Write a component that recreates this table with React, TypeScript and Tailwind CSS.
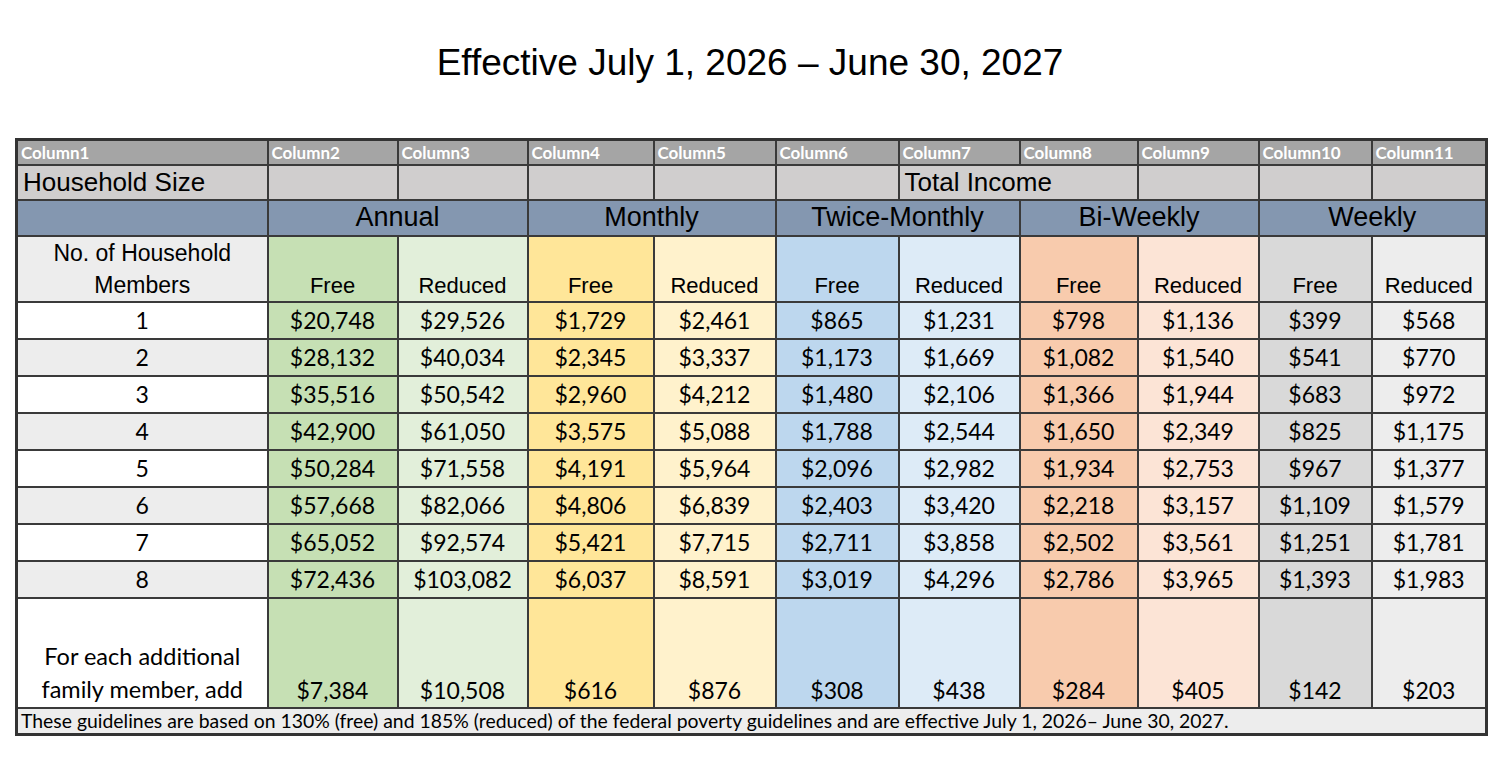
import React from "react";

const cols = ["w-[251px]", "w-[130px]", "w-[130px]", "w-[126px]", "w-[122px]", "w-[123px]", "w-[121px]", "w-[118px]", "w-[121px]", "w-[113px]", "w-[115px]"];

// background per income column (free / reduced pairs)
const fills = [
  "bg-[#c6e0b4]",
  "bg-[#e2efda]",
  "bg-[#ffe699]",
  "bg-[#fff2cc]",
  "bg-[#bdd7ee]",
  "bg-[#ddebf7]",
  "bg-[#f8cbad]",
  "bg-[#fce4d6]",
  "bg-[#d9d9d9]",
  "bg-[#ededed]",
];

const rows = [
  ["$20,748", "$29,526", "$1,729", "$2,461", "$865", "$1,231", "$798", "$1,136", "$399", "$568"],
  ["$28,132", "$40,034", "$2,345", "$3,337", "$1,173", "$1,669", "$1,082", "$1,540", "$541", "$770"],
  ["$35,516", "$50,542", "$2,960", "$4,212", "$1,480", "$2,106", "$1,366", "$1,944", "$683", "$972"],
  ["$42,900", "$61,050", "$3,575", "$5,088", "$1,788", "$2,544", "$1,650", "$2,349", "$825", "$1,175"],
  ["$50,284", "$71,558", "$4,191", "$5,964", "$2,096", "$2,982", "$1,934", "$2,753", "$967", "$1,377"],
  ["$57,668", "$82,066", "$4,806", "$6,839", "$2,403", "$3,420", "$2,218", "$3,157", "$1,109", "$1,579"],
  ["$65,052", "$92,574", "$5,421", "$7,715", "$2,711", "$3,858", "$2,502", "$3,561", "$1,251", "$1,781"],
  ["$72,436", "$103,082", "$6,037", "$8,591", "$3,019", "$4,296", "$2,786", "$3,965", "$1,393", "$1,983"],
];

const additional = ["$7,384", "$10,508", "$616", "$876", "$308", "$438", "$284", "$405", "$142", "$203"];

const groups = ["Annual", "Monthly", "Twice-Monthly", "Bi-Weekly", "Weekly"];

const arial = "font-['Liberation_Sans',Arial,sans-serif]";
const calibri = "font-['Lato','Open_Sans',sans-serif]";
const cell = "border-2 border-[#3a3a3a] p-0";

export default function App() {
  return (
    <div className="w-[1500px] h-[757px] bg-white text-black overflow-hidden">
      <h1 className={`${arial} text-[37px] leading-none text-center pt-[44px] h-[138px]`}>
        Effective July 1, 2026 – June 30, 2027
      </h1>

      <table className="ml-[15px] w-[1470px] table-fixed border-collapse border-[3px] border-[#333]">
        <colgroup>
          {cols.map((c, i) => (
            <col key={i} className={c} />
          ))}
        </colgroup>
        <tbody>
          {/* Column names */}
          <tr className="h-[25px] bg-[#a5a5a5]">
            {cols.map((_, i) => (
              <td key={i} className={`${cell} ${calibri} font-bold text-[17px] leading-none text-white px-[3px] align-middle`}>
                Column{i + 1}
              </td>
            ))}
          </tr>

          {/* Household size / total income */}
          <tr className={`h-[35px] bg-[#d0cece] ${arial} text-[26px] leading-none`}>
            <td className={`${cell} px-[5px]`}>Household Size</td>
            <td className={cell}></td>
            <td className={cell}></td>
            <td className={cell}></td>
            <td className={cell}></td>
            <td className={cell}></td>
            <td className={`${cell} px-[5px] whitespace-nowrap`} colSpan={2}>
              Total Income
            </td>
            <td className={cell}></td>
            <td className={cell}></td>
            <td className={cell}></td>
          </tr>

          {/* Pay period groups */}
          <tr className={`h-[36px] bg-[#8497b0] ${arial} text-[27px] leading-none`}>
            <td className={cell}></td>
            {groups.map((g) => (
              <td key={g} colSpan={2} className={`${cell} text-center`}>
                {g}
              </td>
            ))}
          </tr>

          {/* Free / Reduced */}
          <tr className={`h-[66px] ${arial} text-[22px] leading-[30px]`}>
            <td className={`${cell} bg-[#ededed] text-[23px] leading-[32px] text-center align-bottom`}>
              No. of Household
              <br />
              Members
            </td>
            {fills.map((f, i) => (
              <td key={i} className={`${cell} ${f} text-center align-bottom`}>
                {i % 2 === 0 ? "Free" : "Reduced"}
              </td>
            ))}
          </tr>

          {rows.map((r, ri) => (
            <tr key={ri} className={`h-[37px] ${calibri} text-[23px] leading-[30px]`}>
              <td className={`${cell} ${ri % 2 === 0 ? "bg-white" : "bg-[#ededed]"} text-center`}>{ri + 1}</td>
              {r.map((v, i) => (
                <td key={i} className={`${cell} ${fills[i]} text-center`}>
                  {v}
                </td>
              ))}
            </tr>
          ))}

          {/* Additional member */}
          <tr className={`h-[110px] ${calibri}`}>
            <td className={`${cell} bg-white text-[23.5px] leading-[33px] text-center align-bottom pb-[1px]`}>
              For each additional
              <br />
              family member, add
            </td>
            {additional.map((v, i) => (
              <td key={i} className={`${cell} ${fills[i]} text-[23px] leading-[30px] text-center align-bottom pb-[2px]`}>
                {v}
              </td>
            ))}
          </tr>

          {/* Footnote */}
          <tr className="h-[27px]">
            <td colSpan={11} className={`border-t border-t-[#c8c8c8] bg-[#ededed] ${calibri} text-[19.4px] leading-none px-[3px] whitespace-nowrap`}>
              These guidelines are based on 130% (free) and 185% (reduced) of the federal poverty guidelines and are effective July 1, 2026– June 30, 2027.
            </td>
          </tr>
        </tbody>
      </table>
    </div>
  );
}
